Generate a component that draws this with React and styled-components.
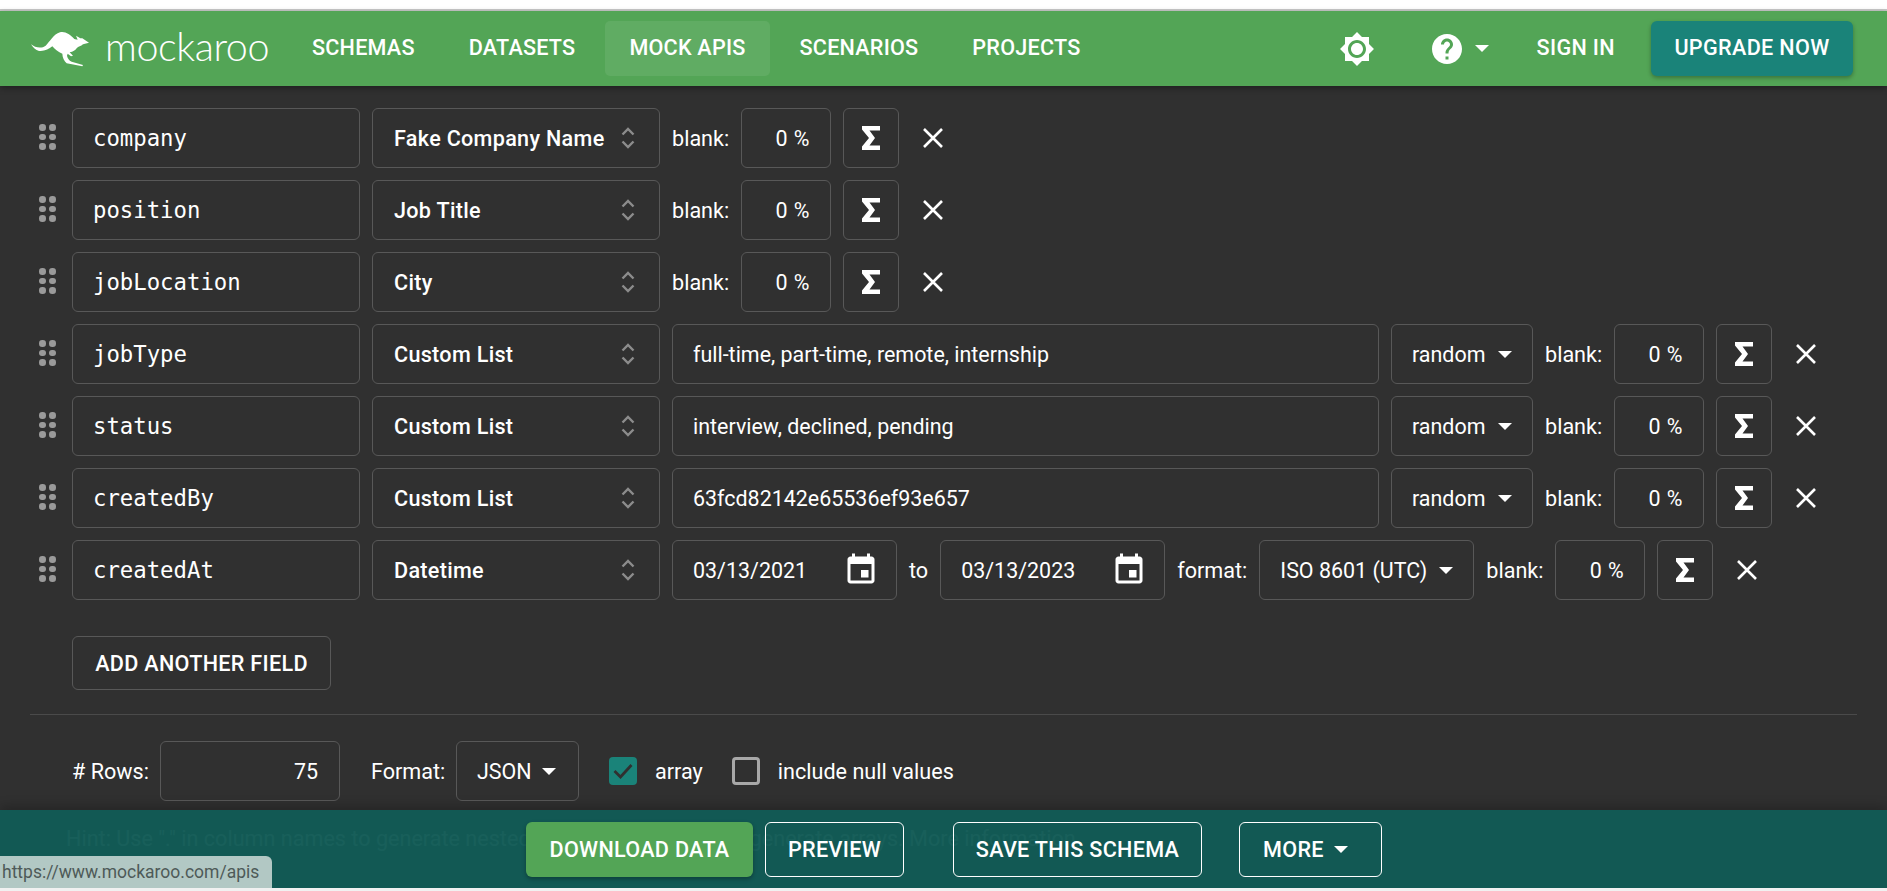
import React from "react";
import styled, { createGlobalStyle } from "styled-components";

const GlobalStyle = createGlobalStyle`
  html, body { margin: 0; padding: 0; height: 100%; background: #f1f1f1; }
  #root { height: 100%; }
  * { box-sizing: border-box; }
`;

const Viewport = styled.div`
  height: 100vh;
  padding-bottom: 3px;
  overflow: hidden;
  font-family: Roboto, "Liberation Sans", sans-serif;
  font-size: 21.6px;
  color: #fff;
`;
const Page = styled.div`
  position: relative;
  height: 100%;
  display: flex;
  flex-direction: column;
  overflow: hidden;
  background: #303030;
`;
const TopStrip = styled.div`
  flex: none;
  height: 11px;
  background: #fff;
  border-bottom: 2px solid #c9c9c9;
`;
const Nav = styled.header`
  flex: none;
  height: 75px;
  display: flex;
  align-items: center;
  padding: 0 34px 0 30px;
  background: #53a556;
  box-shadow: 0 2px 6px rgba(0, 0, 0, 0.35);
  z-index: 2;
`;
const Logo = styled.div`
  width: 258px;
  flex: none;
  display: flex;
  align-items: center;
  gap: 14px;
`;
const LogoWord = styled.span`
  font-family: Lato, sans-serif;
  font-weight: 300;
  font-size: 39.5px;
  line-height: 1;
  letter-spacing: -0.4px;
  transform: translateY(-3px);
`;
const NavLinks = styled.nav`
  display: flex;
  gap: 6px;
`;
const NavLink = styled.a`
  height: 55px;
  display: flex;
  align-items: center;
  padding: 0 24px 2px;
  border-radius: 5px;
  font-weight: 500;
  letter-spacing: 0.22px;
  background: ${(p) => (p.$active ? "rgba(255,255,255,0.08)" : "transparent")};
`;
const NavRight = styled.div`
  margin-left: auto;
  display: flex;
  align-items: center;
`;
const IconSlot = styled.span`
  display: flex;
  margin-right: ${(p) => p.$mr || 0}px;
`;
const Caret = styled.span`
  flex: none;
  width: 0;
  height: 0;
  border-left: 7.5px solid transparent;
  border-right: 7.5px solid transparent;
  border-top: 7.5px solid #fff;
  margin-left: ${(p) => p.$ml || 0}px;
`;
const SignIn = styled.a`
  margin-left: 48px;
  font-weight: 500;
  letter-spacing: 0.35px;
  padding-bottom: 2px;
`;
const Upgrade = styled.a`
  margin-left: 36px;
  height: 55px;
  width: 202px;
  display: flex;
  align-items: center;
  justify-content: center;
  padding-bottom: 2px;
  background: #1a8379;
  border-radius: 6px;
  font-weight: 500;
  letter-spacing: 0.35px;
  box-shadow: 0 2px 4px rgba(0, 0, 0, 0.3);
`;

const Main = styled.main`
  flex: 1;
  padding: 22px 30px 0;
  display: flex;
  flex-direction: column;
`;
const FieldRow = styled.div`
  display: flex;
  align-items: center;
  gap: 12px;
  height: 60px;
  margin-bottom: 12px;
`;
const Handle = styled.span`
  flex: none;
  width: 30px;
  display: grid;
  grid-template-columns: repeat(2, 6px);
  gap: 3px 4px;
  justify-content: center;
  transform: translate(2px, -1px);
`;
const Dot = styled.i`
  width: 6.5px;
  height: 6.5px;
  border-radius: 50%;
  background: #9a9a9a;
`;
const Box = styled.div`
  flex: none;
  width: ${(p) => p.$w}px;
  height: 60px;
  display: flex;
  align-items: center;
  justify-content: ${(p) => p.$justify || "flex-start"};
  padding: 0 ${(p) => p.$pr ?? 21}px 0 20px;
  border: 1px solid #585858;
  border-radius: 6px;
  font-size: 21.45px;
  white-space: nowrap;
`;
const NameBox = styled(Box)`
  font-family: "DejaVu Sans Mono", monospace;
  font-size: 22.3px;
  padding-left: 20px;
`;
const TypeBox = styled(Box)`
  font-size: 21.6px;
  font-weight: 500;
  letter-spacing: 0.3px;
  padding-left: 21px;
  justify-content: space-between;
  padding-right: 24px;
`;
const BlankBox = styled(Box)`
  justify-content: center;
  padding: 0 0 0 13px;
  word-spacing: 1px;
`;
const SigmaBox = styled(Box)`
  justify-content: center;
  padding: 0;
`;
const DropBox = styled(Box)`
  justify-content: space-between;
  padding-right: ${(p) => p.$pr ?? 20}px;
`;
const DateBox = styled(Box)`
  justify-content: space-between;
  padding-right: 17px;
`;
const Label = styled.span`
  flex: none;
  width: ${(p) => (p.$w ? p.$w + "px" : "auto")};
  white-space: nowrap;
`;
const RemoveIcon = styled.span`
  display: flex;
  margin-left: 11px;
`;
const AddButton = styled.button`
  align-self: flex-start;
  margin: 24px 0 24px 42px;
  width: 259px;
  height: 54px;
  padding: 0;
  background: transparent;
  color: #fff;
  border: 1px solid #585858;
  border-radius: 6px;
  font: 500 21.6px Roboto, sans-serif;
  letter-spacing: 0.3px;
`;
const Divider = styled.hr`
  width: 100%;
  margin: 0;
  border: 0;
  border-top: 1px solid #4a4a4a;
`;
const OptionsRow = styled.div`
  display: flex;
  align-items: center;
  height: 60px;
  margin: 26px 0 0 42px;
`;
const RowsLabel = styled.span`
  flex: none;
  width: 88px;
`;
const RowsBox = styled(Box)`
  justify-content: flex-end;
`;
const FormatLabel = styled.span`
  margin-left: 31px;
  width: 85px;
  flex: none;
`;
const CheckBox = styled.span`
  flex: none;
  width: 28px;
  height: 28px;
  margin-left: ${(p) => p.$ml}px;
  border-radius: 4px;
  display: flex;
  align-items: center;
  justify-content: center;
  background: ${(p) => (p.$checked ? "#1a8379" : "transparent")};
  border: ${(p) => (p.$checked ? "0" : "3px solid #a8a8a8")};
`;
const CheckText = styled.span`
  margin-left: 18px;
  white-space: nowrap;
`;
const Hint = styled.p`
  margin: 26px 0 0 36px;
  white-space: nowrap;
  line-height: 24px;
  color: rgba(255, 255, 255, 0.55);
`;
const Footer = styled.footer`
  position: absolute;
  left: 0;
  right: 0;
  bottom: 0;
  height: 78px;
  display: flex;
  align-items: center;
  padding: 0 0 0 526px;
  background: rgba(17, 92, 86, 0.95);
  box-shadow: 0 -4px 10px rgba(0, 0, 0, 0.22);
`;
const FootButton = styled.a`
  flex: none;
  width: ${(p) => p.$w}px;
  height: 55px;
  margin-left: ${(p) => p.$ml || 0}px;
  display: flex;
  align-items: center;
  justify-content: center;
  padding: 0 ${(p) => p.$pr || 0}px 0 0;
  border-radius: 6px;
  font-weight: 500;
  letter-spacing: 0.3px;
  white-space: nowrap;
  background: ${(p) => (p.$primary ? "#53a556" : "transparent")};
  border: ${(p) => (p.$primary ? "0" : "1px solid #fff")};
  box-shadow: ${(p) => (p.$primary ? "0 2px 4px rgba(0,0,0,0.3)" : "none")};
`;
const StatusTip = styled.div`
  position: absolute;
  left: 0;
  bottom: 0;
  width: 272px;
  height: 32px;
  padding-left: 2px;
  display: flex;
  align-items: center;
  background: #b2c8c4;
  color: #4e5a58;
  font-size: 17.5px;
  border-top-right-radius: 6px;
  white-space: nowrap;
`;

const Kangaroo = () => (
  <svg width="61" height="37" viewBox="15 35 183 111" fill="#fff" aria-hidden="true">
    <path d="M18 78C30 88 50 92 62 82C75 70 85 48 105 42C120 38 135 48 148 62C152 64 155 63 158 64L153 52L166 60L172 60L192 73L174 78C168 84 160 84 155 90C150 97 145 100 134 102L144 112L138 114L128 106L126 112C128 120 132 126 140 130L174 140L172 144L125 135C118 128 112 118 112 106C100 101 90 93 82 84C72 92 58 100 42 98C32 96 24 88 18 78Z" />
  </svg>
);
const SunIcon = () => (
  <svg width="36" height="36" viewBox="0 0 24 24" fill="#fff" aria-hidden="true">
    <path d="M20 8.69V4h-4.69L12 .69 8.69 4H4v4.69L.69 12 4 15.31V20h4.69L12 23.31 15.31 20H20v-4.69L23.31 12 20 8.69zM12 18c-3.31 0-6-2.69-6-6s2.69-6 6-6 6 2.69 6 6-2.69 6-6 6zm0-10c-2.21 0-4 1.79-4 4s1.79 4 4 4 4-1.79 4-4-1.79-4-4-4z" />
  </svg>
);
const HelpIcon = () => (
  <svg width="36" height="36" viewBox="0 0 24 24" fill="#fff" aria-hidden="true">
    <path d="M12 2C6.48 2 2 6.48 2 12s4.48 10 10 10 10-4.48 10-10S17.52 2 12 2zm1 17h-2v-2h2v2zm2.07-7.75l-.9.92C13.45 12.9 13 13.5 13 15h-2v-.5c0-1.1.45-2.1 1.17-2.83l1.24-1.26c.37-.36.59-.86.59-1.41 0-1.1-.9-2-2-2s-2 .9-2 2H8c0-2.21 1.79-4 4-4s4 1.79 4 4c0 .88-.36 1.68-.93 2.25z" />
  </svg>
);
const Chevrons = () => (
  <svg width="14" height="24" viewBox="0 0 14 24" fill="none" stroke="#8c8c8c" strokeWidth="2.4" aria-hidden="true">
    <path d="M1.5 8.5L7 3l5.5 5.5M1.5 15.5L7 21l5.5-5.5" />
  </svg>
);
const SigmaIcon = () => (
  <svg width="18" height="24" viewBox="0 0 18 24" fill="#fff" aria-hidden="true">
    <path d="M0 0H18V4.5H7.5L13 12L7.5 19.5H18V24H0V20.5L7 12L0 3.5Z" />
  </svg>
);
const CloseIcon = () => (
  <svg width="22" height="22" viewBox="0 0 22 22" fill="none" stroke="#fff" strokeWidth="2.6" aria-hidden="true">
    <path d="M2 2L20 20M20 2L2 20" />
  </svg>
);
const CalendarIcon = () => (
  <svg width="36" height="36" viewBox="0 0 24 24" fill="#fff" aria-hidden="true">
    <path d="M17 12h-5v5h5v-5zM16 1v2H8V1H6v2H5c-1.11 0-1.99.9-1.99 2L3 19c0 1.1.89 2 2 2h14c1.1 0 2-.9 2-2V5c0-1.1-.9-2-2-2h-1V1h-2zm3 18H5V8h14v11z" />
  </svg>
);
const CheckMark = () => (
  <svg width="20" height="16" viewBox="0 0 20 16" fill="none" stroke="#303030" strokeWidth="2.8" aria-hidden="true">
    <path d="M1.5 8L7.5 14L18.5 2" />
  </svg>
);

const Blank = () => (
  <>
    <Label $w={57}>blank:</Label>
    <BlankBox $w={90}>0 %</BlankBox>
    <SigmaBox $w={56}><SigmaIcon /></SigmaBox>
    <RemoveIcon><CloseIcon /></RemoveIcon>
  </>
);
const Random = () => (
  <DropBox $w={142}>random<Caret /></DropBox>
);

const fields = [
  { name: "company", type: "Fake Company Name" },
  { name: "position", type: "Job Title" },
  { name: "jobLocation", type: "City" },
  { name: "jobType", type: "Custom List", list: "full-time, part-time, remote, internship" },
  { name: "status", type: "Custom List", list: "interview, declined, pending" },
  { name: "createdBy", type: "Custom List", list: "63fcd82142e65536ef93e657" },
  { name: "createdAt", type: "Datetime", dates: ["03/13/2021", "03/13/2023"] },
];

const Field = ({ name, type, list, dates }) => (
  <FieldRow>
    <Handle>{Array.from({ length: 6 }, (_, i) => <Dot key={i} />)}</Handle>
    <NameBox $w={288}>{name}</NameBox>
    <TypeBox $w={288}>{type}<Chevrons /></TypeBox>
    {list && (
      <>
        <Box $w={707}>{list}</Box>
        <Random />
      </>
    )}
    {dates && (
      <>
        <DateBox $w={225}>{dates[0]}<CalendarIcon /></DateBox>
        <Label>to</Label>
        <DateBox $w={225}>{dates[1]}<CalendarIcon /></DateBox>
        <Label>format:</Label>
        <DropBox $w={215}>ISO 8601 (UTC)<Caret /></DropBox>
      </>
    )}
    <Blank />
  </FieldRow>
);

export default function App() {
  return (
    <Viewport>
      <GlobalStyle />
      <Page>
        <TopStrip />
        <Nav>
          <Logo>
            <Kangaroo />
            <LogoWord>mockaroo</LogoWord>
          </Logo>
          <NavLinks>
            <NavLink>SCHEMAS</NavLink>
            <NavLink>DATASETS</NavLink>
            <NavLink $active>MOCK APIS</NavLink>
            <NavLink>SCENARIOS</NavLink>
            <NavLink>PROJECTS</NavLink>
          </NavLinks>
          <NavRight>
            <IconSlot $mr={54}><SunIcon /></IconSlot>
            <HelpIcon />
            <Caret $ml={10} />
            <SignIn>SIGN IN</SignIn>
            <Upgrade>UPGRADE NOW</Upgrade>
          </NavRight>
        </Nav>
        <Main>
          {fields.map((f) => <Field key={f.name} {...f} />)}
          <AddButton>ADD ANOTHER FIELD</AddButton>
          <Divider />
          <OptionsRow>
            <RowsLabel># Rows:</RowsLabel>
            <RowsBox $w={180}>75</RowsBox>
            <FormatLabel>Format:</FormatLabel>
            <DropBox $w={123} $pr={22}>JSON<Caret /></DropBox>
            <CheckBox $ml={30} $checked><CheckMark /></CheckBox>
            <CheckText>array</CheckText>
            <CheckBox $ml={29} />
            <CheckText>include null values</CheckText>
          </OptionsRow>
          <Hint>Hint: Use "." in column names to generate nested objects and add "[]" to generate arrays. More information</Hint>
        </Main>
        <Footer>
          <FootButton $primary $w={227}>DOWNLOAD DATA</FootButton>
          <FootButton $w={139} $ml={12}>PREVIEW</FootButton>
          <FootButton $w={249} $ml={49}>SAVE THIS SCHEMA</FootButton>
          <FootButton $w={143} $ml={37} $pr={10}>MORE<Caret $ml={10} /></FootButton>
        </Footer>
        <StatusTip>https://www.mockaroo.com/apis</StatusTip>
      </Page>
    </Viewport>
  );
}
